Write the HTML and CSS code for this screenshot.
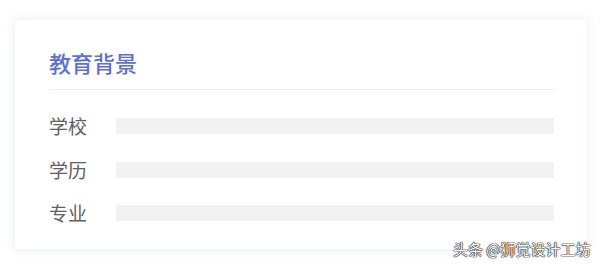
FILE: index.html
```html
<!DOCTYPE html>
<html lang="zh-CN">
<head>
    <meta charset="UTF-8">
    <meta name="viewport" content="width=device-width, initial-scale=1.0">
    <title>教育背景</title>
    <link rel="stylesheet" href="styles.css">
</head>
<body>
    <div class="card">
        <h2 class="title">教育背景</h2>
        <div class="rows">
            <div class="row"><span class="label">学校</span><div class="bar"></div></div>
            <div class="row"><span class="label">学历</span><div class="bar"></div></div>
            <div class="row"><span class="label">专业</span><div class="bar"></div></div>
        </div>
    </div>
    <div class="mark">头条 @狮觉设计工坊</div>
</body>
</html>
```

FILE: styles.css
```css
body {
    margin: 0;
    background-color: #ffffff;
    font-family: "Noto Sans CJK SC", "Noto Sans", sans-serif;
    width: 600px;
    height: 266px;
    overflow: hidden;
    position: relative;
}

.card {
    margin: 20px 0 0 15px;
    width: 572px;
    height: 229px;
    box-sizing: border-box;
    padding: 0 33px 0 34px;
    background-color: #fff;
    border-radius: 4px;
    box-shadow: 0 0 8px 2px rgba(90, 110, 240, 0.10);
}

.title {
    margin: 0;
    padding-top: 26px;
    height: 43px;
    font-size: 22px;
    line-height: 32px;
    font-weight: 500;
    color: #5b6fd9;
    border-bottom: 1px solid #f0f1f5;
}

.rows {
    display: flex;
    flex-direction: column;
    gap: 17.5px;
    padding-top: 23px;
}

.row {
    display: flex;
    align-items: center;
    height: 26px;
}

.label {
    width: 67px;
    font-size: 19px;
    line-height: 26px;
    color: #606060;
}

.bar {
    flex: 1;
    height: 16px;
    background-color: #f2f2f2;
}

.mark {
    position: absolute;
    left: 453px;
    top: 239px;
    font-size: 15px;
    line-height: 20px;
    color: #ffffff;
    text-shadow: 0 0 1px #222, 0 0 1px #222, 0 0 1px #222, 0 0 1px #222;
}
```
